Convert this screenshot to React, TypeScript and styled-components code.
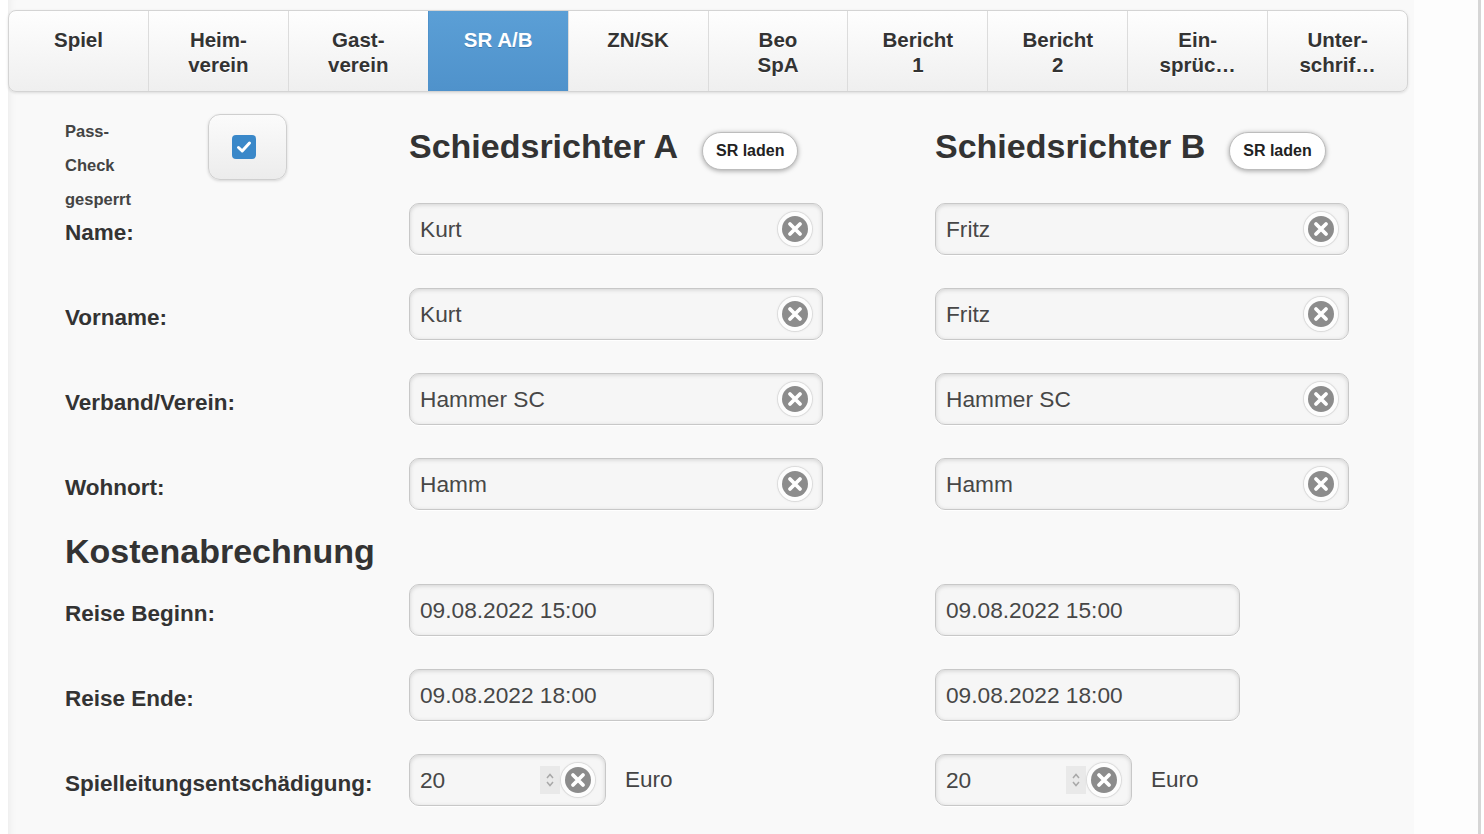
import React from "react";
import styled, { createGlobalStyle } from "styled-components";

const Global = createGlobalStyle`
  html, body { margin: 0; padding: 0; background: #ffffff; }
  body { font-family: "Liberation Sans", Arial, sans-serif; color: #333; }
  * { box-sizing: border-box; }
`;

const Shell = styled.div`
  display: flex;
  padding-left: 8px;
  min-height: 834px;
  overflow: hidden;
`;

const Content = styled.main`
  width: 1406px;
  flex: none;
  min-height: 834px;
  background: #f9f9f9;
  padding-top: 10px;
  box-shadow: inset 8px 0 10px -8px rgba(0, 0, 0, 0.08);
`;

const Gutter = styled.div`
  width: 67px;
  flex: none;
  background: #fdfdfd;
  border-right: 3px solid #d6d6d6;
`;

const TabBar = styled.nav`
  width: 1400px;
  height: 82px;
  display: flex;
  border: 1px solid #d4d4d4;
  border-radius: 8px;
  overflow: hidden;
  background: linear-gradient(#fefefe, #efefef);
  box-shadow: 0 1px 3px rgba(0, 0, 0, 0.12);
`;

const Tab = styled.div<{ $active?: boolean }>`
  flex: 1;
  padding-top: 16px;
  text-align: center;
  font-weight: bold;
  font-size: 20.5px;
  line-height: 25px;
  color: ${(p) => (p.$active ? "#fff" : "#333")};
  background: ${(p) => (p.$active ? "linear-gradient(#5b9fd6, #4f92cb)" : "transparent")};
  border-left: 1px solid ${(p) => (p.$active ? "#4f92cb" : "#dcdcdc")};
  text-shadow: ${(p) => (p.$active ? "0 1px 0 #3c7ab0" : "0 1px 0 #fff")};
  &:first-child { border-left: none; }
`;

const Form = styled.section`
  padding: 22px 0 0 57px;
`;

const Row = styled.div<{ $h?: number; $mb?: number }>`
  display: grid;
  grid-template-columns: 344px 526px 1fr;
  height: ${(p) => p.$h ?? 52}px;
  margin-bottom: ${(p) => p.$mb ?? 33}px;
  align-items: center;
`;

const HeaderRow = styled(Row)`
  align-items: start;
`;

const PassCheck = styled.div`
  display: flex;
  align-self: start;
`;

const PassText = styled.div`
  width: 143px;
  font-weight: bold;
  font-size: 16.5px;
  line-height: 34px;
  color: #444;
`;

const CheckButton = styled.div`
  width: 79px;
  height: 66px;
  border: 1px solid #cfcfcf;
  border-radius: 12px;
  background: linear-gradient(#fbfbfb, #ececec);
  box-shadow: 0 1px 3px rgba(0, 0, 0, 0.15);
  display: flex;
  align-items: center;
  justify-content: center;
  padding-right: 8px;
`;

const CheckBox = styled.div`
  width: 24px;
  height: 24px;
  border-radius: 4px;
  background: #3a88c9;
  display: flex;
  align-items: center;
  justify-content: center;
`;

const RefHead = styled.div`
  display: flex;
  align-items: flex-start;
`;

const H2 = styled.h2`
  margin: 12px 0 0;
  font-size: 34px;
  line-height: 40px;
  font-weight: bold;
  color: #333;
`;

const LoadButton = styled.button`
  margin: 18px 0 0 24px;
  height: 38px;
  padding: 0 13px;
  border: 1px solid #bdbdbd;
  border-radius: 19px;
  background: #fff;
  box-shadow: 0 1px 5px rgba(0, 0, 0, 0.35);
  font-family: "Liberation Sans", Arial, sans-serif;
  font-weight: bold;
  font-size: 16px;
  color: #222;
`;

const Label = styled.div`
  font-weight: bold;
  font-size: 22.5px;
  color: #333;
  padding-top: 8px;
  white-space: nowrap;
`;

const InputBox = styled.div<{ $w: number }>`
  width: ${(p) => p.$w}px;
  height: 52px;
  border: 1px solid #c8c8c8;
  border-radius: 10px;
  background: #f6f6f6;
  box-shadow: inset 0 1px 4px rgba(0, 0, 0, 0.15), 0 1px 0 #fff;
  display: flex;
  align-items: center;
  padding: 0 10px 0 10px;
  font-size: 22.7px;
  color: #474747;
`;

const Value = styled.span`
  flex: 1;
  white-space: nowrap;
`;

const ClearBtn = styled.span`
  width: 34px;
  height: 34px;
  border-radius: 50%;
  display: flex;
  align-items: center;
  justify-content: center;
  background: rgba(255, 255, 255, 0.75);
  box-shadow: 0 0 0 1px rgba(0, 0, 0, 0.07), 0 0 3px rgba(0, 0, 0, 0.12);
`;

const Spinner = styled.span`
  width: 20px;
  height: 28px;
  margin-right: 1px;
  background: #e9e9e9;
  display: flex;
  align-items: center;
  justify-content: center;
`;

const Cell = styled.div`
  display: flex;
  align-items: center;
`;

const Unit = styled.span`
  margin-left: 19px;
  font-size: 22.5px;
  color: #444;
`;

const SectionTitle = styled.h2`
  margin: 21px 0 13px 0;
  font-size: 34px;
  line-height: 40px;
  font-weight: bold;
  color: #333;
`;

const ClearIcon = () => (
  <ClearBtn>
    <svg width="28" height="28" viewBox="0 0 28 28">
      <circle cx="14" cy="14" r="13" fill="#8c8c8c" />
      <path d="M9 9 L19 19 M19 9 L9 19" stroke="#fff" strokeWidth="3.8" strokeLinecap="round" />
    </svg>
  </ClearBtn>
);

const SpinIcon = () => (
  <Spinner>
    <svg width="10" height="18" viewBox="0 0 10 18">
      <path d="M2 7 L5 3.5 L8 7 M2 11 L5 14.5 L8 11" stroke="#a8a8a8" strokeWidth="1.5" fill="none" />
    </svg>
  </Spinner>
);

const TextField = ({ value, width = 414 }: { value: string; width?: number }) => (
  <InputBox $w={width}>
    <Value>{value}</Value>
    <ClearIcon />
  </InputBox>
);

const PlainField = ({ value }: { value: string }) => (
  <InputBox $w={305}>
    <Value>{value}</Value>
  </InputBox>
);

const NumberField = ({ value }: { value: string }) => (
  <Cell>
    <InputBox $w={197}>
      <Value>{value}</Value>
      <SpinIcon />
      <ClearIcon />
    </InputBox>
    <Unit>Euro</Unit>
  </Cell>
);

const tabs: { label: React.ReactNode; active?: boolean }[] = [
  { label: "Spiel" },
  { label: <>Heim-<br />verein</> },
  { label: <>Gast-<br />verein</> },
  { label: "SR A/B", active: true },
  { label: "ZN/SK" },
  { label: <>Beo<br />SpA</> },
  { label: <>Bericht<br />1</> },
  { label: <>Bericht<br />2</> },
  { label: <>Ein-<br />sprüc…</> },
  { label: <>Unter-<br />schrif…</> },
];

const people = [
  ["Name:", "Kurt", "Fritz"],
  ["Vorname:", "Kurt", "Fritz"],
  ["Verband/Verein:", "Hammer SC", "Hammer SC"],
  ["Wohnort:", "Hamm", "Hamm"],
];

export default function App() {
  return (
    <>
      <Global />
      <Shell>
        <Content>
          <TabBar>
            {tabs.map((t, i) => (
              <Tab key={i} $active={t.active}>{t.label}</Tab>
            ))}
          </TabBar>
          <Form>
            <HeaderRow $h={89} $mb={0}>
              <PassCheck>
                <PassText>
                  Pass-<br />Check<br />gesperrt
                </PassText>
                <CheckButton>
                  <CheckBox>
                    <svg width="16" height="14" viewBox="0 0 16 14">
                      <path d="M2.5 7.5 L6.2 11 L13.5 3" stroke="#fff" strokeWidth="3" fill="none" strokeLinecap="round" strokeLinejoin="round" />
                    </svg>
                  </CheckBox>
                </CheckButton>
              </PassCheck>
              <RefHead>
                <H2>Schiedsrichter A</H2>
                <LoadButton>SR laden</LoadButton>
              </RefHead>
              <RefHead>
                <H2>Schiedsrichter B</H2>
                <LoadButton>SR laden</LoadButton>
              </RefHead>
            </HeaderRow>
            {people.map(([label, a, b], i) => (
              <Row key={label} $mb={i === people.length - 1 ? 0 : 33}>
                <Label>{label}</Label>
                <TextField value={a} />
                <TextField value={b} />
              </Row>
            ))}
            <SectionTitle>Kostenabrechnung</SectionTitle>
            <Row>
              <Label>Reise Beginn:</Label>
              <PlainField value="09.08.2022 15:00" />
              <PlainField value="09.08.2022 15:00" />
            </Row>
            <Row>
              <Label>Reise Ende:</Label>
              <PlainField value="09.08.2022 18:00" />
              <PlainField value="09.08.2022 18:00" />
            </Row>
            <Row>
              <Label>Spielleitungsentschädigung:</Label>
              <NumberField value="20" />
              <NumberField value="20" />
            </Row>
          </Form>
        </Content>
        <Gutter />
      </Shell>
    </>
  );
}
